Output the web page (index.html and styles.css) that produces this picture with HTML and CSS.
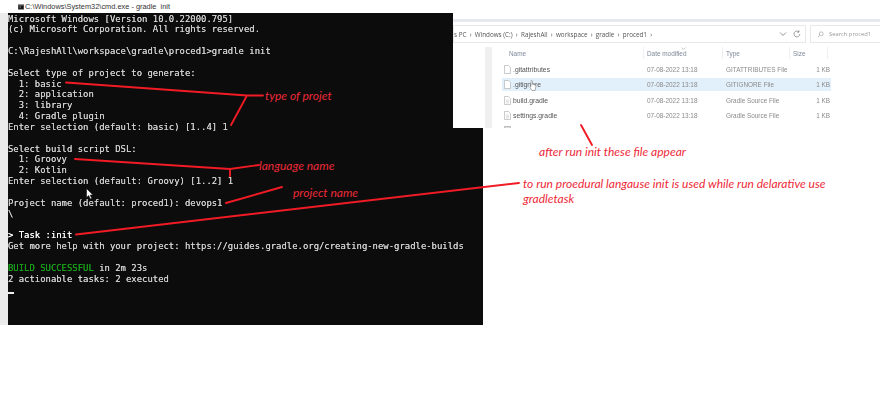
FILE: index.html
```html
<!DOCTYPE html>
<html lang="en">
<head>
<meta charset="utf-8">
<title>gradle init</title>
<link rel="stylesheet" href="styles.css">
</head>
<body>
<div class="canvas">
  <section class="cmd">
    <header class="cmd-title">
      <svg class="cmd-icon" viewBox="0 0 8 7"><rect width="8" height="7" fill="#555"/><rect x="1" y="2" width="6" height="4" fill="#111"/><rect x="2" y="3" width="2" height="1" fill="#ccc"/></svg>
      <span>C:\Windows\System32\cmd.exe - gradle  init</span>
    </header>
    <div class="cmd-body">
<pre class="console">Microsoft Windows [Version 10.0.22000.795]
(c) Microsoft Corporation. All rights reserved.

C:\RajeshAll\workspace\gradle\proced1&gt;gradle init

Select type of project to generate:
  1: basic
  2: application
  3: library
  4: Gradle plugin
Enter selection (default: basic) [1..4] 1

Select build script DSL:
  1: Groovy
  2: Kotlin
Enter selection (default: Groovy) [1..2] 1

Project name (default: proced1): devops1
\

<span class="strong">&gt; Task :init</span>
Get more help with your project: https://guides.gradle.org/creating-new-gradle-builds

<span class="ok">BUILD SUCCESSFUL</span> in 2m 23s
2 actionable tasks: 2 executed</pre>
      <div class="caret"></div>
    </div>
  </section>

  <section class="explorer">
    <div class="exp-rule"></div>
    <div class="exp-bar">
      <div class="address">
        <span class="crumbs">s PC &nbsp;›&nbsp; Windows (C:) &nbsp;›&nbsp; RajeshAll &nbsp;›&nbsp; workspace &nbsp;›&nbsp; gradle &nbsp;›&nbsp; proced1 &nbsp;›</span>
        <svg class="addr-icon" viewBox="0 0 8 8"><path d="M1 2.5 4 5.5 7 2.5" fill="none" stroke="#777" stroke-width=".8"/></svg>
        <svg class="addr-icon" viewBox="0 0 8 8"><path d="M6.8 4A2.9 2.9 0 1 1 5.8 1.8M6 .4V2.2H4.2" fill="none" stroke="#777" stroke-width=".7"/></svg>
      </div>
      <div class="search">
        <svg class="search-icon" viewBox="0 0 8 8"><circle cx="4.8" cy="3.2" r="2.2" fill="none" stroke="#999" stroke-width=".7"/><path d="M3.2 4.8 1 7" stroke="#999" stroke-width=".7"/></svg>
        <span>Search proced1</span>
      </div>
    </div>
    <div class="exp-main">
      <div class="exp-nav"></div>
      <div class="exp-list">
        <div class="row head"><span>Name</span><span>Date modified</span><span>Type</span><span>Size</span></div>
        <div class="row"><span class="fname"><svg class="file" viewBox="0 0 7 9"><path d="M.5.5H4.5L6.5 2.5V8.5H.5Z" fill="#fff" stroke="#aaa" stroke-width=".6"/></svg>.gitattributes</span><span>07-08-2022 13:18</span><span>GITATTRIBUTES File</span><span class="size">1 KB</span></div>
        <div class="row selected"><span class="fname"><svg class="file" viewBox="0 0 7 9"><path d="M.5.5H4.5L6.5 2.5V8.5H.5Z" fill="#fff" stroke="#aaa" stroke-width=".6"/></svg>.gitignore</span><span>07-08-2022 13:18</span><span>GITIGNORE File</span><span class="size">1 KB</span></div>
        <div class="row"><span class="fname"><svg class="file" viewBox="0 0 7 9"><path d="M.5.5H4.5L6.5 2.5V8.5H.5Z" fill="#fff" stroke="#aaa" stroke-width=".6"/><path d="M2 4H5M2 5.5H5M2 7H5" stroke="#bbb" stroke-width=".5"/></svg>build.gradle</span><span>07-08-2022 13:18</span><span>Gradle Source File</span><span class="size">1 KB</span></div>
        <div class="row"><span class="fname"><svg class="file" viewBox="0 0 7 9"><path d="M.5.5H4.5L6.5 2.5V8.5H.5Z" fill="#fff" stroke="#aaa" stroke-width=".6"/><path d="M2 4H5M2 5.5H5M2 7H5" stroke="#bbb" stroke-width=".5"/></svg>settings.gradle</span><span>07-08-2022 13:18</span><span>Gradle Source File</span><span class="size">1 KB</span></div>
        <div class="row"><span class="fname"><svg class="file" viewBox="0 0 7 9"><path d="M.5.5H6.5V8.5H.5Z" fill="#ddd" stroke="#999" stroke-width=".6"/></svg></span></div>
      </div>
      <svg class="sort" viewBox="0 0 6 3"><path d="M.5.5 3 2.5 5.500.5" fill="none" stroke="#999" stroke-width=".6"/></svg>
    </div>
  </section>

  <svg class="marks" viewBox="0 0 880 409">
    <path d="M66 82.5 247 95.500H263M247 95.500 231 125" />
    <path d="M75 159 230 169 259 165M230 169V176" />
    <path d="M226 203 282 187" />
    <path d="M76 234.500 519 183" />
    <path d="M581 125 592 145" />
  </svg>
  <svg class="pointer pointer-cmd" viewBox="0 0 8 12"><path d="M.5.5V9.500L2.700 7.600 4.200 11 5.700 10.300 4.200 7H7Z" fill="#fff" stroke="#111" stroke-width=".6"/></svg>
  <svg class="pointer pointer-exp" viewBox="0 0 8 12"><path d="M2 6V1.300C2 .3 3.400 .3 3.400 1.300V4.200L6 5C7 5.300 7 6 6.800 7L6 10.500H3L1 7.500Z" fill="#fff" stroke="#777" stroke-width=".6"/></svg>
  <span class="note note-type">type of projet</span>
  <span class="note note-lang">language name</span>
  <span class="note note-proj">project name</span>
  <span class="note note-after">after run init these file appear</span>
  <p class="note note-run">to run proedural langause init is used while run delarative use gradletask</p>
</div>
</body>
</html>
```
FILE: styles.css
```css
html, body { margin: 0; padding: 0; background: #fff; }
.canvas { position: relative; width: 880px; height: 409px; overflow: hidden; background: #fff; }

.cmd { position: absolute; left: 0; top: 0; width: 483px; height: 325px; display: flex; flex-direction: column; }
.cmd-title { height: 13px; display: flex; align-items: center; gap: 1px; padding-left: 18px; background: #fff; font: 7.4px/13px "Liberation Sans", sans-serif; color: #333; white-space: pre; }
.cmd-icon { width: 6px; height: 6px; flex: none; }
.cmd-body { flex: 1; padding-left: 8px; background: #ebebeb; position: relative; }
.console { margin: 0; height: 100%; box-sizing: border-box; padding-top: .5px; background: #0c0c0c; color: #cfcfcf; font: 8.92px/10.85px "DejaVu Sans Mono", monospace; text-shadow: 0 0 .4px #cfcfcf; filter: blur(.3px); }
.strong { color: #fff; text-shadow: 0 0 .6px #fff; }
.ok { color: #19a019; text-shadow: 0 0 .4px #19a019; }
.caret { position: absolute; left: 8px; top: 279px; width: 6px; height: 2px; background: #eee; }

.explorer { position: absolute; left: 453px; top: 0; width: 427px; height: 128px; background: #fff; display: flex; flex-direction: column; font-family: "Open Sans", sans-serif; filter: blur(.3px); }
.exp-rule { height: 3px; margin-top: 19px; background: #e6eaee; flex: none; }
.exp-bar { display: flex; gap: 4px; margin-top: 3px; height: 18px; flex: none; }
.address { width: 353px; box-sizing: border-box; border: 1px solid #e8e8e8; display: flex; align-items: center; gap: 6px; padding-right: 4px; font-size: 6.3px; color: #555; }
.crumbs { flex: 1; white-space: nowrap; }
.addr-icon { width: 8px; height: 8px; flex: none; }
.search { flex: 1; border: 1px solid #e8e8e8; border-right: 0; display: flex; align-items: center; gap: 5px; padding-left: 6px; font-size: 5.8px; color: #999; white-space: nowrap; }
.search-icon { width: 7px; height: 7px; flex: none; }
.exp-main { display: flex; flex: 1; min-height: 0; margin-top: 4px; position: relative; overflow: hidden; }
.exp-nav { width: 7px; margin-left: 32px; background: #f0f0f0; flex: none; }
.exp-list { margin-left: 10px; width: 329px; font: 6.4px "Liberation Sans", sans-serif; color: #8a8a8a; }
.row { display: grid; grid-template-columns: 143px 79px 67px 1fr; align-items: center; height: 13px; margin-bottom: 2.35px; padding-left: 2px; box-sizing: border-box; white-space: nowrap; }
.row.head { height: 12px; margin-bottom: 4px; color: #7f8a9a; align-items: stretch; }
.row.head span { display: flex; align-items: center; margin-right: 3px; border-right: 1px solid #f0f0f0; }
.row.head span:first-child { padding-left: 5px; }
.row.selected { background: #e2f0fb; }
.fname { display: flex; align-items: center; gap: 2px; color: #555; font-size: 6.8px; }
.file { width: 7px; height: 9px; flex: none; }
.size { text-align: right; padding-right: 1px; }
.sort { position: absolute; left: 228px; top: 0; width: 5px; height: 3px; }

.marks { position: absolute; left: 0; top: 0; width: 880px; height: 409px; fill: none; stroke: #f01b24; stroke-width: 1.9; stroke-linecap: round; stroke-linejoin: round; }
.pointer { position: absolute; width: 8px; height: 12px; }
.pointer-cmd { left: 86px; top: 188px; }
.pointer-exp { left: 529px; top: 80px; }

.note { position: absolute; margin: 0; font: italic 12px/15px "Lato", sans-serif; color: #ec2a38; white-space: nowrap; }
.note-type { left: 265px; top: 88px; }
.note-lang { left: 259px; top: 158px; }
.note-proj { left: 293px; top: 185px; }
.note-after { left: 539px; top: 144px; }
.note-run { left: 523px; top: 176px; width: 320px; white-space: normal; }
```
